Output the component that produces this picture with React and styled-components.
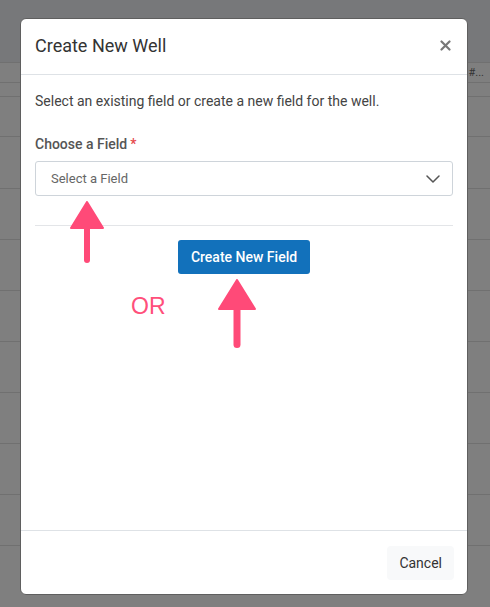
import React from "react";
import styled, { createGlobalStyle } from "styled-components";

const Global = createGlobalStyle`
  html, body { margin: 0; padding: 0; }
  body { font-family: Roboto, "Noto Sans", sans-serif; width: 490px; height: 607px; overflow: hidden; background: #7f7f7f; }
`;

const Backdrop = styled.div`
  position: relative;
  width: 490px;
  height: 607px;
  display: flex;
  flex-direction: column;
  background: #7f7f7f;
`;

const BgRow = styled.div`
  height: ${(p) => p.$h}px;
  flex-shrink: 0;
  border-bottom: 1px solid #707070;
  background: ${(p) => p.$bg || "#7f7f7f"};
  display: flex;
  justify-content: flex-end;
  align-items: center;
  padding-right: 6px;
  font-size: 11px;
  color: #333;
  box-sizing: border-box;
`;

const Modal = styled.div`
  position: absolute;
  top: 18px;
  left: 20px;
  width: 448px;
  height: 577px;
  background: #fff;
  border-radius: 6px;
  border: 1px solid #5f5f5f;
  box-sizing: border-box;
  display: flex;
  flex-direction: column;
`;

const Header = styled.div`
  height: 56px;
  flex-shrink: 0;
  border-bottom: 1px solid #dee2e6;
  display: flex;
  align-items: center;
  justify-content: space-between;
  padding: 0 14px 0 14px;
  box-sizing: border-box;
`;

const Title = styled.h5`
  margin: 0;
  font-size: 18px;
  font-weight: 400;
  color: #333;
  padding-bottom: 2px;
`;

const Close = styled.button`
  border: none;
  background: none;
  padding: 0;
  width: 16px;
  height: 16px;
  display: flex;
  align-items: center;
  justify-content: center;
  margin-bottom: 3px;
`;

const Body = styled.div`
  position: relative;
  flex: 1;
  padding: 16px 14px 0 14px;
  display: flex;
  flex-direction: column;
`;

const Intro = styled.p`
  margin: 0;
  font-size: 14px;
  color: #444;
  line-height: 20px;
`;

const Label = styled.label`
  margin-top: 23px;
  font-size: 14px;
  font-weight: 500;
  color: #555;
  line-height: 20px;
`;

const Req = styled.span`
  color: #e5484d;
  margin-left: 3px;
`;

const Select = styled.div`
  margin-top: 7px;
  height: 35px;
  border: 1px solid #ced4da;
  border-radius: 3px;
  box-sizing: border-box;
  display: flex;
  align-items: center;
  justify-content: space-between;
  padding: 0 12px 0 15px;
  font-size: 13px;
  color: #666;
`;

const Divider = styled.hr`
  margin: 29px 0 0 0;
  border: none;
  border-top: 1px solid #e3e5e8;
`;

const Center = styled.div`
  display: flex;
  justify-content: center;
  margin-top: 14px;
`;

const Primary = styled.button`
  height: 34px;
  padding: 0 13px;
  background: #1271bb;
  color: #fff;
  border: none;
  border-radius: 3px;
  font-family: Roboto, sans-serif;
  font-size: 14px;
  font-weight: 500;
`;

const Or = styled.span`
  position: absolute;
  left: 110px;
  top: 218px;
  font-family: "Liberation Sans", Arial, sans-serif;
  font-size: 23px;
  line-height: 26px;
  color: #ff4f7b;
`;

const Arrow = styled.svg`
  position: absolute;
  left: ${(p) => p.$x}px;
  top: ${(p) => p.$y}px;
`;

const Footer = styled.div`
  height: 64px;
  flex-shrink: 0;
  border-top: 1px solid #dee2e6;
  display: flex;
  align-items: center;
  justify-content: flex-end;
  padding: 0 13px;
  box-sizing: border-box;
`;

const Secondary = styled.button`
  height: 34px;
  padding: 0 12px;
  background: #f8f9fa;
  color: #333;
  border: none;
  border-radius: 4px;
  font-family: Roboto, sans-serif;
  font-size: 14px;
`;

const rows = [
  { h: 63, bg: "#77787a" },
  { h: 20, text: "#..." },
  { h: 14 },
  { h: 40 },
  { h: 52 },
  { h: 51 },
  { h: 51 },
  { h: 51 },
  { h: 51 },
  { h: 51 },
  { h: 51 },
  { h: 51 },
  { h: 62 },
];

function UpArrow({ x, y, w, head, len, stroke }) {
  const cx = w / 2;
  return (
    <Arrow $x={x} $y={y} width={w} height={len} viewBox={`0 0 ${w} ${len}`}>
      <line x1={cx} y1={head - 2} x2={cx} y2={len - stroke / 2} stroke="#ff4a78" strokeWidth={stroke} strokeLinecap="round" />
      <polygon points={`${cx},1 ${w - 1},${head} 1,${head}`} fill="#ff4a78" stroke="#ff4a78" strokeWidth="2" strokeLinejoin="round" />
    </Arrow>
  );
}

export default function App() {
  return (
    <>
      <Global />
      <Backdrop>
        {rows.map((r, i) => (
          <BgRow key={i} $h={r.h} $bg={r.bg}>
            {r.text}
          </BgRow>
        ))}
        <Modal>
          <Header>
            <Title>Create New Well</Title>
            <Close aria-label="Close">
              <svg width="11" height="11" viewBox="0 0 11 11">
                <path d="M1.5 1.5 L9.5 9.5 M9.5 1.5 L1.5 9.5" stroke="#777" strokeWidth="2.2" strokeLinecap="round" />
              </svg>
            </Close>
          </Header>
          <Body>
            <Intro>Select an existing field or create a new field for the well.</Intro>
            <Label>
              Choose a Field<Req>*</Req>
            </Label>
            <Select>
              <span>Select a Field</span>
              <svg width="14" height="8" viewBox="0 0 14 8">
                <path d="M1 1 L7 7 L13 1" fill="none" stroke="#555" strokeWidth="1.5" strokeLinecap="round" strokeLinejoin="round" />
              </svg>
            </Select>
            <Divider />
            <Center>
              <Primary>Create New Field</Primary>
            </Center>
            <Or>OR</Or>
            <UpArrow x={49} y={126} w={34} head={27} len={62} stroke={6} />
            <UpArrow x={197} y={204} w={38} head={30} len={69} stroke={7} />
          </Body>
          <Footer>
            <Secondary>Cancel</Secondary>
          </Footer>
        </Modal>
      </Backdrop>
    </>
  );
}
